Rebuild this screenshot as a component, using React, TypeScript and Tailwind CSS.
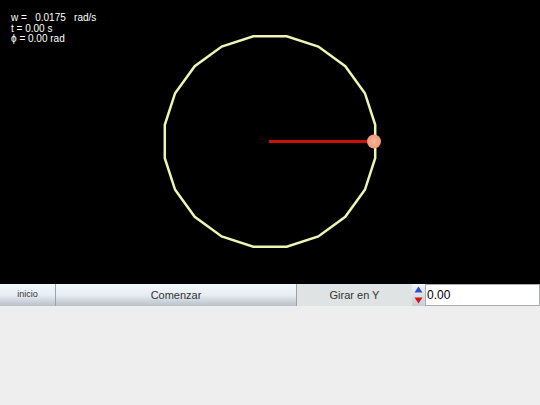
import React from "react";

const CX = 270;
const CY = 141.5;
const R = 106.5;

function polygonPoints(n: number) {
  const pts: string[] = [];
  for (let k = 0; k < n; k++) {
    const a = ((9 + 18 * k) * Math.PI) / 180;
    pts.push(`${(CX + R * Math.cos(a)).toFixed(1)},${(CY + R * Math.sin(a)).toFixed(1)}`);
  }
  return pts.join(" ");
}

function Scene() {
  return (
    <div className="relative h-[284px] w-full bg-black">
      <svg width="540" height="284" className="block">
        <polygon points={polygonPoints(20)} fill="none" stroke="#eef5b2" strokeWidth="2.5" />
        <line x1="269" y1="141.5" x2="370" y2="141.5" stroke="#cc1010" strokeWidth="3" />
        <defs>
          <radialGradient id="dot" cx="50%" cy="50%" r="50%">
            <stop offset="0%" stopColor="#f7b79a" />
            <stop offset="100%" stopColor="#f29a7c" />
          </radialGradient>
        </defs>
        <circle cx="374" cy="141.5" r="7" fill="url(#dot)" />
      </svg>
      <div className="absolute left-[11px] top-[13px] text-[10px] leading-[10.5px] text-white font-['Liberation_Sans',sans-serif] whitespace-pre">
        <div>w =   0.0175   rad/s</div>
        <div>t = 0.00 s</div>
        <div>ϕ = 0.00 rad</div>
      </div>
    </div>
  );
}

function Controls() {
  const btn =
    "h-full flex items-center justify-center border-r border-[#9aa3ab] bg-gradient-to-b from-[#f3f8fd] via-[#e6edf4] to-[#b9c1c8] text-[#333]";
  return (
    <div className="flex h-[22px] w-full font-['Liberation_Sans',sans-serif] text-[11px]">
      <button className={`${btn} w-[56px] text-[9px]`}>inicio</button>
      <button className={`${btn} w-[241px]`}>Comenzar</button>
      <div className="h-full w-[115px] flex items-center justify-center bg-[#dfe3e3] text-[#333]">Girar en Y</div>
      <div className="h-full w-[13px] flex flex-col bg-gradient-to-b from-[#f4f6f8] to-[#c9cdd0]">
        <div className="flex-1 flex items-center justify-center">
          <svg width="9" height="7" viewBox="0 0 9 7">
            <polygon points="4.5,0.5 8.5,6.5 0.5,6.5" fill="#2a4fc9" />
          </svg>
        </div>
        <div className="flex-1 flex items-center justify-center">
          <svg width="9" height="7" viewBox="0 0 9 7">
            <polygon points="0.5,0.5 8.5,0.5 4.5,6.5" fill="#d4101c" />
          </svg>
        </div>
      </div>
      <div className="h-full flex-1 flex items-center bg-white border border-[#a8acae] pl-[1px] text-[12px] text-black">0.00</div>
    </div>
  );
}

export default function App() {
  return (
    <div className="w-[540px] h-[405px] bg-[#eeeeee] overflow-hidden">
      <Scene />
      <Controls />
    </div>
  );
}
